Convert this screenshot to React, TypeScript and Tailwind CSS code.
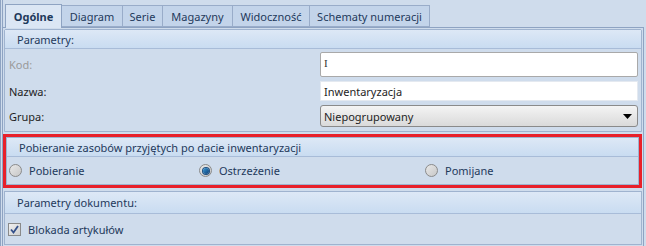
import React from 'react';

const tabs = [
    { label: "Diagram", w: "w-[61px]" },
    { label: "Serie", w: "w-[40px]" },
    { label: "Magazyny", w: "w-[70px]" },
    { label: "Widoczność", w: "w-[77px]" },
    { label: "Schematy numeracji", w: "w-[120px]" },
];

const GroupHeader = ({ title }: { title: string }) => (
    <div className="h-[19px] flex items-center pl-[12px] bg-gradient-to-b from-[#dde8f6] to-[#c9dcf1] border-b border-[#a8bcd8] text-[#1e395b]">
        {title}
    </div>
);

const Radio = ({ checked, label }: { checked?: boolean; label: string }) => (
    <div className="flex items-center gap-[7px]">
        <span className="w-[13px] h-[13px] rounded-full border border-[#8a8a8a] bg-gradient-to-br from-[#e8e8e8] to-[#c8c8c8] flex items-center justify-center">
            {checked && <span className="w-[6px] h-[6px] rounded-full bg-gradient-to-br from-[#3c9ad6] to-[#0d3f78] shadow-[0_0_0_1px_#1d4f82]" />}
        </span>
        <span className="text-[#1e395b]">{label}</span>
    </div>
);

const App = () => {
    return (
        <div className="w-[646px] h-[246px] overflow-hidden bg-[#cfdcec] border-l-[3px] border-double border-[#8ea3c2] text-[11px] leading-none font-['Segoe_UI','Noto_Sans',sans-serif] text-[#1e1e1e]">
            <div className="flex items-end h-[27px] pl-[2px]">
                <div className="h-[24px] w-[57px] flex items-center justify-center border border-b-0 border-[#8ea3c2] bg-[#dbe6f4] font-bold text-[#1e395b] relative top-[1px]">
                    Ogólne
                </div>
                {tabs.map((t) => (
                    <div key={t.label} className={`${t.w} h-[22px] flex items-center justify-center border border-l-0 border-[#99acc9] bg-[#c3d4ea] text-[#1e395b]`}>
                        {t.label}
                    </div>
                ))}
            </div>
            <div className="h-[219px] mr-[2px] border-t border-r border-[#8ea3c2] pt-[1px] pl-[1px] pr-[1px] flex flex-col">
                <div className="h-[103px] border border-[#9fb3cf] rounded-t-[2px] flex flex-col">
                    <GroupHeader title="Parametry:" />
                    <div className="flex flex-col pl-[4px] pr-[3px] pt-[3px] gap-[4px]">
                        <div className="flex items-center h-[25px]">
                            <span className="w-[311px] text-[#9a9a9a]">Kod:</span>
                            <div className="flex-1 h-[25px] bg-white border border-[#a9a9a9] rounded-[2px] pl-[3px] pt-[5px] text-[#333] font-['Liberation_Serif',serif]">I</div>
                        </div>
                        <div className="flex items-center h-[20px]">
                            <span className="w-[311px]">Nazwa:</span>
                            <div className="flex-1 h-[20px] bg-white border border-[#e4e9f0] pl-[3px] flex items-center">Inwentaryzacja</div>
                        </div>
                        <div className="flex items-center h-[22px]">
                            <span className="w-[311px]">Grupa:</span>
                            <div className="flex-1 h-[22px] rounded-[3px] border border-[#8a8a8a] bg-gradient-to-b from-[#f4f4f4] to-[#dadada] pl-[3px] pr-[5px] flex items-center justify-between">
                                <span>Niepogrupowany</span>
                                <svg width="9" height="5" viewBox="0 0 9 5"><path d="M0 0h9L4.5 5z" fill="#000" /></svg>
                            </div>
                        </div>
                    </div>
                </div>
                <div className="mt-[2px] h-[54px] border-[3px] border-[#e8202a] -ml-[1px]">
                    <div className="h-[48px] border border-[#9fb3cf] flex flex-col">
                        <GroupHeader title="Pobieranie zasobów przyjętych po dacie inwentaryzacji" />
                        <div className="flex items-center flex-1 pl-[2px]">
                            <div className="w-[190px]"><Radio label="Pobieranie" /></div>
                            <div className="w-[226px]"><Radio checked label="Ostrzeżenie" /></div>
                            <Radio label="Pomijane" />
                        </div>
                    </div>
                </div>
                <div className="mt-[3px] h-[54px] border border-[#9fb3cf] flex flex-col">
                    <div className="h-[22px] flex items-center pl-[12px] bg-gradient-to-b from-[#dde8f6] to-[#c9dcf1] border-b border-[#a8bcd8] text-[#1e395b]">
                        Parametry dokumentu:
                    </div>
                    <div className="flex items-center flex-1 pl-[3px] gap-[7px]">
                        <span className="w-[13px] h-[13px] border border-[#8a8a8a] bg-gradient-to-br from-[#f0f0f0] to-[#cfcfcf] flex items-center justify-center">
                            <svg width="9" height="9" viewBox="0 0 9 9"><path d="M1 4.5l2.5 3L8 1" stroke="#34508a" strokeWidth="1.8" fill="none" /></svg>
                        </span>
                        <span className="text-[#1e395b]">Blokada artykułów</span>
                    </div>
                </div>
            </div>
        </div>
    );
};

export default App;
